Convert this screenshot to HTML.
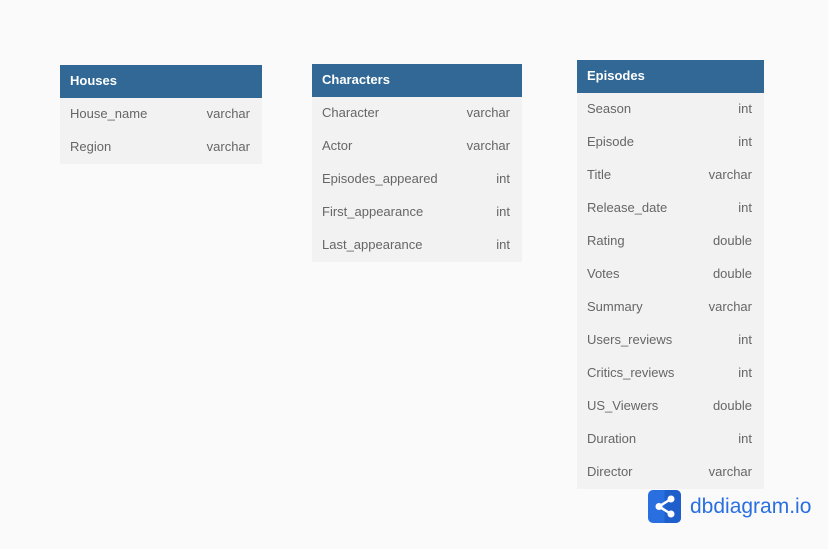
<!DOCTYPE html><html><head><style>
body{margin:0;width:828px;height:549px;background:#fafafa;font-family:"Liberation Sans",sans-serif;position:relative;overflow:hidden}
.t{position:absolute;background:#f2f2f2}
.h{background:#316896;color:#fff;font-weight:bold;font-size:13px;height:33px;line-height:31px;padding-left:10px;box-sizing:border-box}
.r{height:33px;line-height:31px;font-size:13px;color:#666;padding:0 12px 0 10px;display:flex;justify-content:space-between}
</style></head><body>
<div class="t" style="left:60px;top:65px;width:202px"><div class="h">Houses</div>
<div class="r"><span>House_name</span><span>varchar</span></div>
<div class="r"><span>Region</span><span>varchar</span></div></div>
<div class="t" style="left:312px;top:64px;width:210px"><div class="h">Characters</div>
<div class="r"><span>Character</span><span>varchar</span></div>
<div class="r"><span>Actor</span><span>varchar</span></div>
<div class="r"><span>Episodes_appeared</span><span>int</span></div>
<div class="r"><span>First_appearance</span><span>int</span></div>
<div class="r"><span>Last_appearance</span><span>int</span></div></div>
<div class="t" style="left:577px;top:60px;width:187px"><div class="h">Episodes</div>
<div class="r"><span>Season</span><span>int</span></div>
<div class="r"><span>Episode</span><span>int</span></div>
<div class="r"><span>Title</span><span>varchar</span></div>
<div class="r"><span>Release_date</span><span>int</span></div>
<div class="r"><span>Rating</span><span>double</span></div>
<div class="r"><span>Votes</span><span>double</span></div>
<div class="r"><span>Summary</span><span>varchar</span></div>
<div class="r"><span>Users_reviews</span><span>int</span></div>
<div class="r"><span>Critics_reviews</span><span>int</span></div>
<div class="r"><span>US_Viewers</span><span>double</span></div>
<div class="r"><span>Duration</span><span>int</span></div>
<div class="r"><span>Director</span><span>varchar</span></div></div>
<svg style="position:absolute;left:648px;top:490px" width="33" height="33" viewBox="0 0 33 33">
<rect width="33" height="33" rx="5" fill="#2a6fe0"/><path d="M16.5 0H28a5 5 0 0 1 5 5v23a5 5 0 0 1-5 5H16.5z" fill="#1f5fcc"/>
<path d="M23 9L11 16.5L23 24" stroke="#fff" stroke-width="2.5" fill="none"/>
<circle cx="23" cy="9" r="3.5" fill="#fff"/><circle cx="11" cy="16.5" r="3.5" fill="#fff"/><circle cx="23" cy="24" r="3.5" fill="#fff"/></svg>
<div style="position:absolute;left:690px;top:494px;font-size:21px;color:#2a6fe0;line-height:26px">dbdiagram.io</div>
</body></html>
